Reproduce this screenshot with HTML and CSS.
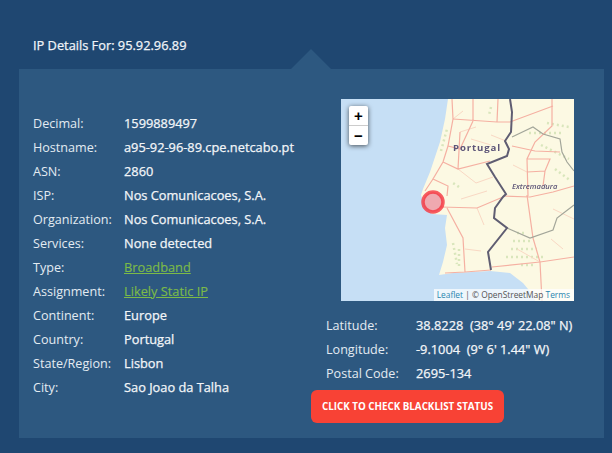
FILE: index.html
```html
<!DOCTYPE html>
<html>

  <head>
    <meta charset="UTF-8">
    <title>IP Details</title>
    <link rel="stylesheet" href="styles.css">
  </head>

  <body>
    <div class="title">IP Details For: 95.92.96.89</div>
    <div class="panel">
      <div class="details">
        <div class="row"><span class="label">Decimal:</span><span class="value">1599889497</span></div>
        <div class="row"><span class="label">Hostname:</span><span class="value">a95-92-96-89.cpe.netcabo.pt</span></div>
        <div class="row"><span class="label">ASN:</span><span class="value">2860</span></div>
        <div class="row"><span class="label">ISP:</span><span class="value">Nos Comunicacoes, S.A.</span></div>
        <div class="row"><span class="label">Organization:</span><span class="value">Nos Comunicacoes, S.A.</span></div>
        <div class="row"><span class="label">Services:</span><span class="value">None detected</span></div>
        <div class="row"><span class="label">Type:</span><a class="green" href="#">Broadband</a></div>
        <div class="row"><span class="label">Assignment:</span><a class="green" href="#">Likely Static IP</a></div>
        <div class="row"><span class="label">Continent:</span><span class="value">Europe</span></div>
        <div class="row"><span class="label">Country:</span><span class="value">Portugal</span></div>
        <div class="row"><span class="label">State/Region:</span><span class="value">Lisbon</span></div>
        <div class="row"><span class="label">City:</span><span class="value">Sao Joao da Talha</span></div>
      </div>
      <div class="side">
        <div class="map">
          <svg class="map-svg" width="233" height="202" viewBox="0 0 233 202">
            <g class="tiles">
              <path class="land" d="M107 0L104 20L99 43L89 73L82 90L80 96L84 108L91 115L106 116L104 129L106 146L102 163L98 176L112 174L149 172L169 174L182 184L192 196L194 202L233 202L233 0Z"/>
              <path class="speckle" d="M100 52L106 30M118 88L112 84M170 150L196 150M165 158L205 158M172 142L190 142M176 134L184 134M180 166L194 166M112 144L116 165M118 150L118 168M188 34L222 34M200 46L228 60M206 24L228 28M150 8L148 16M214 70L230 82"/>
              <path class="road-thin" d="M119 33L135 28M117 70L135 84L152 78M136 109L143 126M112 20L122 12M165 42L150 36M186 73L172 66M124 150L140 152M199 163L176 150M130 40L150 46M120 100L146 92M212 110L233 120M210 140L222 150"/>
              <path class="road" d="M111 0L112 20L107 47L102 63L92 80L107 87L106 97M107 47L119 50L132 22"/>
              <path class="road" d="M112 20L156 23L169 23L212 7M132 0L132 22M157 0L156 23M102 63L117 70L149 62M119 33L117 70M92 80L84 92"/>
              <path class="road" d="M211 0L211 27L194 43L186 60L187 97M171 47L194 52L219 53M186 60L209 60L204 72L186 73M204 72L202 87"/>
              <path class="road" d="M162 97L189 98L212 93L233 87M100 108L136 109L162 98M106 109L122 139L124 173M186 96L192 139L199 163L201 202"/>
              <path class="road" d="M151 168L199 163L233 158M104 174L124 173L150 171"/>
              <path class="grey-line" d="M171 38L192 28L202 35L219 40L221 53L226 63L233 72M166 129L189 139L212 131L216 119L233 106"/>
              <path class="border" d="M169 0L171 13L170 33L164 42L168 50L166 57L146 65L154 78L165 95L162 98L154 109L153 119L166 129L147 153L150 171"/>
            </g>
            <text class="place" x="112" y="52">Portugal</text>
            <text class="region" x="171" y="90">Extremadura</text>
            <circle class="marker" cx="92" cy="103" r="10"/>
          </svg>
          <div class="zoom">
            <div class="zoom-btn">+</div>
            <div class="zoom-btn">&minus;</div>
          </div>
          <div class="credit"><a href="#">Leaflet</a> | &copy; OpenStreetMap <a href="#">Terms</a></div>
        </div>
        <div class="geo">
          <div class="row"><span class="label geo-label">Latitude:</span><span class="value">38.8228&nbsp; (38° 49' 22.08" N)</span></div>
          <div class="row"><span class="label geo-label">Longitude:</span><span class="value">-9.1004&nbsp; (9° 6' 1.44" W)</span></div>
          <div class="row"><span class="label geo-label">Postal Code:</span><span class="value">2695-134</span></div>
        </div>
        <a class="check-btn" href="#">CLICK TO CHECK BLACKLIST STATUS</a>
      </div>
    </div>
  </body>

</html>
```

FILE: styles.css
```css
body {
  margin: 0;
  height: 453px;
  overflow: hidden;
  background: #1f4771;
  font-family: "Open Sans", "Liberation Sans", sans-serif;
  font-size: 12.6px;
  color: #e3ebf2;
}

.title {
  padding: 36px 0 0 33px;
  height: 33px;
  line-height: 18px;
  font-size: 12.8px;
  color: #f0f4f8;
  -webkit-text-stroke: 0.25px #f0f4f8;
}

.panel {
  position: relative;
  display: flex;
  width: 585px;
  margin-left: 19px;
  background: #2d5880;
  padding-bottom: 15px;
}

.panel::before {
  content: "";
  position: absolute;
  top: -20px;
  left: 272px;
  border-left: 20px solid transparent;
  border-right: 20px solid transparent;
  border-bottom: 20px solid #2d5880;
}

.details {
  width: 278px;
  padding: 42px 0 0 14px;
}

.row {
  display: flex;
  align-items: baseline;
  height: 24px;
  line-height: 24px;
}

.label {
  width: 91px;
  flex-shrink: 0;
}

.geo-label {
  width: 90px;
}

.value {
  font-size: 12.8px;
  color: #f2f5f8;
  -webkit-text-stroke: 0.25px #f2f5f8;
  white-space: nowrap;
}

.green {
  font-size: 12.8px;
  color: #7cba48;
  -webkit-text-stroke: 0.15px #7cba48;
  text-decoration: underline;
}

.side {
  padding-top: 30px;
}

.map {
  position: relative;
  width: 233px;
  height: 202px;
  margin-left: 30px;
  background: #c6dff5;
  overflow: hidden;
}

.map-svg {
  display: block;
}

.tiles {
  filter: blur(0.7px);
}

.land {
  fill: #fcf9e3;
}

.speckle {
  fill: none;
  stroke: #d9e6bc;
  stroke-width: 2.5;
  stroke-dasharray: 2 3;
}

.road {
  fill: none;
  stroke: #f5b0a2;
  stroke-width: 1.2;
}

.road-thin {
  fill: none;
  stroke: #f9d8c4;
  stroke-width: 1;
}

.grey-line {
  fill: none;
  stroke: #a3a69a;
  stroke-width: 1.2;
}

.border {
  fill: none;
  stroke: #5f5d72;
  stroke-width: 2;
}

.place {
  font-size: 9.6px;
  font-weight: 700;
  letter-spacing: 0.9px;
  fill: #5d5578;
  filter: blur(0.3px);
}

.region {
  font-size: 7.6px;
  font-weight: 600;
  font-style: italic;
  fill: #5d5578;
  filter: blur(0.3px);
}

.marker {
  fill: rgba(225, 90, 125, 0.5);
  stroke: #f5353f;
  stroke-width: 3.5;
  stroke-opacity: 0.8;
}

.zoom {
  position: absolute;
  top: 7px;
  left: 8px;
  width: 19px;
  background: #fff;
  border-radius: 2px;
  box-shadow: 0 1px 5px rgba(0, 0, 0, 0.65);
}

.zoom-btn {
  height: 19px;
  line-height: 19px;
  text-align: center;
  font-family: "Liberation Sans", sans-serif;
  font-size: 15px;
  font-weight: 700;
  color: #000;
}

.zoom-btn + .zoom-btn {
  border-top: 1px solid #ccc;
}

.credit {
  position: absolute;
  right: 0;
  bottom: 0;
  height: 12px;
  line-height: 12px;
  padding: 0 4px 0 3px;
  font-size: 8.4px;
  color: #555;
  background: rgba(255, 255, 255, 0.7);
  white-space: nowrap;
}

.credit a {
  color: #2a86b0;
  text-decoration: none;
}

.geo {
  margin: 12px 0 5px 15px;
}

.check-btn {
  display: block;
  width: 193px;
  height: 33px;
  line-height: 33px;
  text-align: center;
  background: #f84235;
  border-radius: 6px;
  color: #fff;
  font-size: 9.8px;
  font-weight: 700;
  text-decoration: none;
}
```
